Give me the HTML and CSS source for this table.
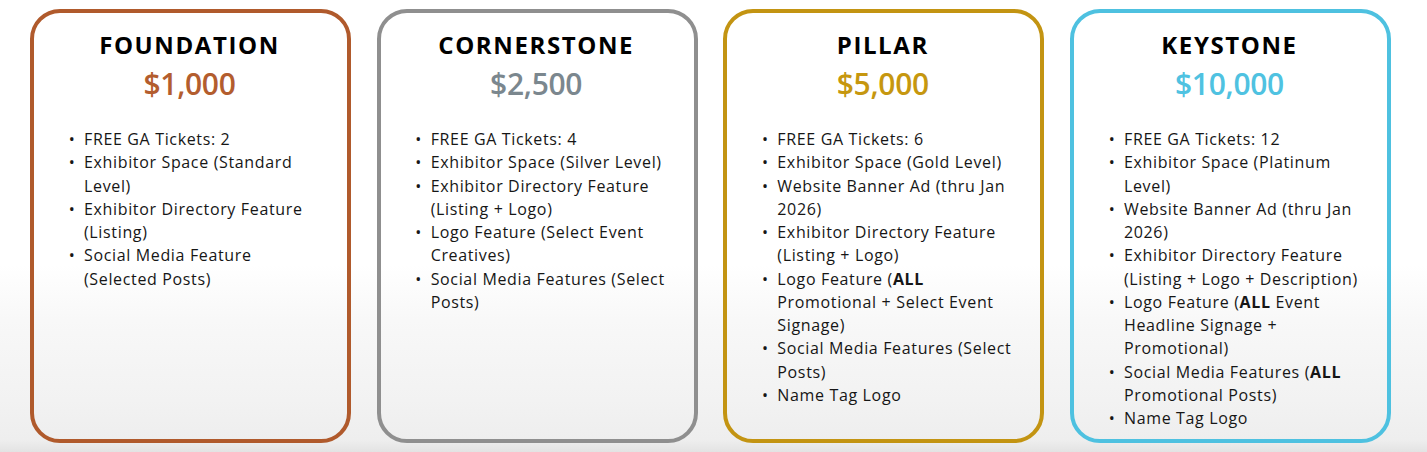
FILE: index.html
```html
<!DOCTYPE html>
<html lang="en">
<head>
<meta charset="utf-8">
<title>Sponsorship Tiers</title>
<link rel="stylesheet" href="styles.css">
</head>
<body>
<main class="tiers">
  <section class="card card-foundation">
    <h2 class="tier-name">FOUNDATION</h2>
    <p class="tier-price">$1,000</p>
    <ul class="perks">
      <li>FREE GA Tickets: 2</li>
      <li>Exhibitor Space (Standard Level)</li>
      <li>Exhibitor Directory Feature (Listing)</li>
      <li>Social Media Feature (Selected Posts)</li>
    </ul>
  </section>
  <section class="card card-cornerstone">
    <h2 class="tier-name">CORNERSTONE</h2>
    <p class="tier-price">$2,500</p>
    <ul class="perks">
      <li>FREE GA Tickets: 4</li>
      <li>Exhibitor Space (Silver Level)</li>
      <li>Exhibitor Directory Feature (Listing + Logo)</li>
      <li>Logo Feature (Select Event Creatives)</li>
      <li>Social Media Features (Select Posts)</li>
    </ul>
  </section>
  <section class="card card-pillar">
    <h2 class="tier-name">PILLAR</h2>
    <p class="tier-price">$5,000</p>
    <ul class="perks">
      <li>FREE GA Tickets: 6</li>
      <li>Exhibitor Space (Gold Level)</li>
      <li>Website Banner Ad (thru Jan 2026)</li>
      <li>Exhibitor Directory Feature (Listing + Logo)</li>
      <li>Logo Feature (<strong>ALL</strong> Promotional + Select Event Signage)</li>
      <li>Social Media Features (Select Posts)</li>
      <li>Name Tag Logo</li>
    </ul>
  </section>
  <section class="card card-keystone">
    <h2 class="tier-name">KEYSTONE</h2>
    <p class="tier-price">$10,000</p>
    <ul class="perks">
      <li>FREE GA Tickets: 12</li>
      <li>Exhibitor Space (Platinum Level)</li>
      <li>Website Banner Ad (thru Jan 2026)</li>
      <li>Exhibitor Directory Feature (Listing + Logo + Description)</li>
      <li>Logo Feature (<strong>ALL</strong> Event Headline Signage + Promotional)</li>
      <li>Social Media Features (<strong>ALL</strong> Promotional Posts)</li>
      <li>Name Tag Logo</li>
    </ul>
  </section>
</main>
</body>
</html>
```
FILE: styles.css
```css
html, body {
  margin: 0;
  padding: 0;
}

body {
  width: 1427px;
  height: 452px;
  overflow: hidden;
  font-family: "Open Sans", "Noto Sans", sans-serif;
  color: #161616;
  background: linear-gradient(to bottom,
    #ffffff 0px,
    #ffffff 265px,
    #f8f8f8 320px,
    #f2f2f2 400px,
    #eeeeee 440px,
    #e3e3e3 452px);
}

.tiers {
  display: flex;
  gap: 25.67px;
  padding: 9px 0 0 30px;
  align-items: stretch;
}

.card {
  width: 321px;
  flex: none;
  box-sizing: border-box;
  border: 4px solid #999;
  border-radius: 30px;
  padding: 17px 22px 9px 20px;
  background: transparent;
}

.tier-name {
  margin: 0;
  text-align: center;
  font-size: 24px;
  line-height: 29px;
  font-weight: 700;
  letter-spacing: 1.6px;
  color: #000;
}

.tier-price {
  margin: 7px 0 0;
  text-align: center;
  font-size: 30px;
  line-height: 36px;
  font-weight: 600;
  letter-spacing: -0.3px;
}

.perks {
  margin: 26px 0 0;
  padding: 0 0 0 30px;
  list-style: none;
}

.perks li {
  font-size: 16px;
  line-height: 23.25px;
  letter-spacing: 0.65px;
  display: list-item;
}

.perks li::marker {
  content: "\2022\2002";
  font-size: 16px;
}

.perks strong {
  font-weight: 700;
}

.card-foundation { border-color: #b05a2c; }
.card-foundation .tier-price { color: #b35d2e; }

.card-cornerstone { border-color: #8f8f8f; }
.card-cornerstone .tier-price { color: #7b878e; }

.card-pillar { border-color: #c39412; }
.card-pillar .tier-price { color: #c6970f; }

.card-keystone { border-color: #4ec1e0; }
.card-keystone .tier-price { color: #4fc2e1; }
```
